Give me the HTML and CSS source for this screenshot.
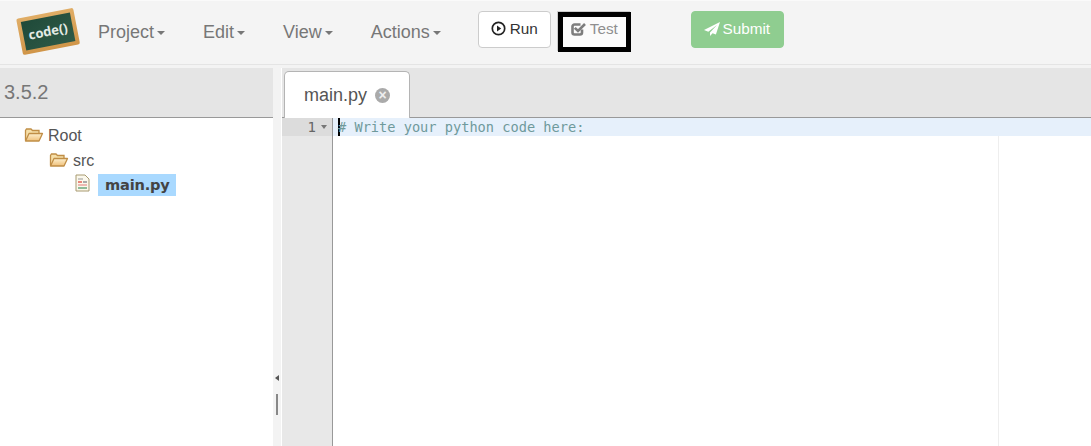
FILE: index.html
```html
<!DOCTYPE html>
<html lang="en">
<head>
<meta charset="utf-8">
<title>code()</title>
<link rel="stylesheet" href="styles.css">
</head>
<body>
<nav class="navbar">
  <svg class="logo" width="66" height="54" viewBox="0 0 66 54">
    <defs>
      <linearGradient id="wood" x1="0" y1="0" x2="0" y2="1"><stop offset="0" stop-color="#e0ad66"/><stop offset="1" stop-color="#d09548"/></linearGradient>
      <linearGradient id="board" x1="0" y1="0" x2="1" y2="1"><stop offset="0" stop-color="#1f4a39"/><stop offset="1" stop-color="#2f5a47"/></linearGradient>
    </defs>
    <g transform="rotate(-11 33 27)">
      <rect x="4" y="9" width="58" height="37" rx="2" fill="url(#wood)"/>
      <rect x="8" y="13" width="50" height="29" fill="url(#board)"/>
      <text class="logo-text" x="33" y="32" text-anchor="middle">code()</text>
    </g>
  </svg>
  <a class="menu menu-first">Project<span class="caret"></span></a>
  <a class="menu">Edit<span class="caret"></span></a>
  <a class="menu">View<span class="caret"></span></a>
  <a class="menu">Actions<span class="caret"></span></a>
  <button class="btn btn-run">
    <svg width="15" height="15" viewBox="0 0 15 15"><circle cx="7.500" cy="7.500" r="6.200" fill="none" stroke="#222" stroke-width="1.700"/><path d="M6 4.600 10.200 7.500 6 10.400Z" fill="#222"/></svg>
    Run
  </button>
  <button class="btn btn-test">
    <svg width="15" height="14" viewBox="0 0 15 14"><path d="M11 7.500V10.500a2 2 0 0 1-2 2H3.500a2 2 0 0 1-2-2V4.500a2 2 0 0 1 2-2H9.500" fill="none" stroke="#7d7d7d" stroke-width="2.600"/><path d="M3.800 5.800 7 9 14 2" fill="none" stroke="#7d7d7d" stroke-width="2.600"/></svg>
    Test
  </button>
  <button class="btn btn-submit">
    <svg width="16" height="14" viewBox="0 0 16 14"><path d="M16 0 0 8l4.300 1.800L13 3 6 10.600V14l2.600-2.800 3.300 1.400Z" fill="#fff"/></svg>
    Submit
  </button>
</nav>
<main class="workspace">
  <aside class="sidebar">
    <div class="version">3.5.2</div>
    <ul class="tree">
      <li class="node node-root">
        <svg class="folder" width="20" height="16" viewBox="0 0 20 16"><use href="#folder-open"/></svg>Root
      </li>
      <li class="node node-src">
        <svg class="folder" width="20" height="16" viewBox="0 0 20 16"><use href="#folder-open"/></svg>src
      </li>
      <li class="node node-file">
        <svg class="file" width="15" height="18" viewBox="0 0 15 18">
          <path d="M1 1h9l4 4v12H1Z" fill="#fbf8ec" stroke="#a89a70"/>
          <path d="M3 5h5" stroke="#999"/>
          <path d="M3 8h4" stroke="#e8877c" stroke-width="2"/>
          <path d="M8 8h4" stroke="#aaa" stroke-width="2"/>
          <path d="M3 11h9" stroke="#e8a5a0" stroke-width="1.500"/>
          <path d="M3 14h9" stroke="#6aa77e" stroke-width="1.500"/>
        </svg>
        <span class="selected">main.py</span>
      </li>
    </ul>
  </aside>
  <div class="splitter">
    <span class="split-arrow"></span>
    <span class="split-handle"></span>
  </div>
  <section class="editor">
    <div class="tabs">
      <div class="tab">main.py<span class="tab-close">×</span></div>
    </div>
    <div class="code">
      <div class="gutter">
        <div class="gutter-active"><span>1</span><span class="fold"></span></div>
      </div>
      <div class="lines">
        <div class="active-line"><span class="cursor"></span><span class="comment"># Write your python code here:</span></div>
        <span class="print-margin"></span>
      </div>
    </div>
  </section>
</main>
<svg class="defs" width="0" height="0">
  <defs>
    <linearGradient id="fold-fill" x1="0" y1="0" x2="0" y2="1"><stop offset="0" stop-color="#fdf0cf"/><stop offset="1" stop-color="#efc07a"/></linearGradient>
    <g id="folder-open">
      <path d="M1.500 13.500V3.500l1-1.500h4.500l1.500 1.500h6.500v2.500" fill="#f6dfa8" stroke="#c08e46" stroke-width="1.300"/>
      <path d="M1.500 14h13.500l3.500-7.500H5Z" fill="url(#fold-fill)" stroke="#c08e46" stroke-width="1.300" stroke-linejoin="round"/>
    </g>
  </defs>
</svg>
</body>
</html>
```
FILE: styles.css
```css
* { box-sizing: border-box; }
html, body { margin: 0; height: 100%; }
body {
  width: 1091px;
  height: 446px;
  overflow: hidden;
  background: #f3f3f3;
  font-family: "Liberation Sans", Arial, sans-serif;
  color: #333;
  display: flex;
  flex-direction: column;
}
.defs { flex: none; }
.navbar {
  height: 65px;
  flex: none;
  display: flex;
  align-items: flex-start;
  background: #f4f4f4;
  border-top: 1px solid #fafafa;
  border-bottom: 1px solid #e4e4e4;
  position: relative;
}
.logo { margin: 3px 0 0 15px; flex: none; }
.logo-text {
  font-family: "Open Sans", sans-serif;
  font-weight: 700;
  font-size: 13px;
  fill: #e4ebe6;
}
.menu {
  font-size: 18px;
  line-height: 20px;
  color: #777;
  margin: 21px 0 0 38px;
  display: flex;
  align-items: center;
}
.menu-first { margin-left: 17px; }
.caret {
  width: 0;
  height: 0;
  margin: 2px 0 0 3px;
  border-top: 4.500px solid #777;
  border-left: 4.500px solid transparent;
  border-right: 4.500px solid transparent;
}
.btn {
  font-family: inherit;
  font-size: 15.300px;
  height: 37px;
  margin-top: 10px;
  padding: 0;
  border-radius: 4px;
  border: 1px solid #ccc;
  background: #fff;
  color: #333;
  display: flex;
  align-items: center;
  justify-content: center;
  gap: 4px;
}
.btn-run { width: 73px; margin-left: 37px; padding-bottom: 2px; }
.btn-test {
  width: 73px;
  height: 40px;
  margin: 11px 0 0 7px;
  border: 5px solid #000;
  border-radius: 0;
  background: #fbfbfb;
  color: #8f8f8f;
  padding-bottom: 7px;
  gap: 4px;
  box-shadow: -1px -1px 0 0 #ccc;
}
.btn-submit {
  width: 93px;
  margin-left: 60px;
  background: #8fcd90;
  border-color: #8fcd90;
  color: #fff;
  padding-bottom: 2px;
  gap: 2px;
}
.workspace {
  flex: 1;
  min-height: 0;
  display: flex;
  margin-top: 3px;
}
.sidebar {
  width: 273px;
  flex: none;
  background: #fff;
}
.version {
  height: 50px;
  background: #e5e5e5;
  border-bottom: 1px solid #999;
  color: #777;
  font-size: 20px;
  line-height: 48px;
  padding-left: 4px;
}
.tree {
  list-style: none;
  margin: 0;
  padding: 8px 0 0;
}
.node {
  height: 25px;
  font-size: 16px;
  line-height: 20px;
  color: #555;
  display: flex;
  align-items: flex-start;
}
.node-root { padding-left: 24px; }
.node-src { padding-left: 49px; }
.node-file { padding-left: 75px; height: 22px; margin-top: -2px; }
.folder { margin: 1px 4px 0 0; flex: none; }
.file { margin: 0 8px 0 0; flex: none; }
.selected {
  background: #a9d9ff;
  color: #444;
  font-family: "DejaVu Sans", sans-serif;
  font-weight: 700;
  font-size: 14.600px;
  line-height: 22px;
  padding: 0 6.500px 0 7px;
  letter-spacing: -.2px;
}
.splitter {
  width: 9px;
  flex: none;
  background: #f3f3f3;
  border-right: 1px solid #fff;
  position: relative;
}
.split-arrow {
  position: absolute;
  left: 2px;
  top: 307px;
  border-right: 4px solid #555;
  border-top: 3.500px solid transparent;
  border-bottom: 3.500px solid transparent;
}
.split-handle {
  position: absolute;
  left: 3px;
  top: 326px;
  width: 2px;
  height: 21px;
  background: #888;
}
.editor {
  flex: 1;
  min-width: 0;
  display: flex;
  flex-direction: column;
  background: #fff;
}
.tabs {
  height: 50px;
  flex: none;
  background: #e5e5e5;
  border-bottom: 1px solid #999;
  padding: 3px 0 0 2px;
  display: flex;
}
.tab {
  width: 126px;
  height: 47px;
  background: #fff;
  border: 1px solid #b4b4b4;
  border-bottom: 0;
  border-radius: 5px 5px 0 0;
  font-size: 18px;
  line-height: 46px;
  color: #555;
  padding-left: 19px;
  display: flex;
  align-items: center;
  gap: 8px;
}
.tab-close {
  width: 15px;
  height: 15px;
  margin-top: 1px;
  border-radius: 50%;
  background: #aaa;
  color: #eee;
  font-size: 14px;
  font-weight: 700;
  line-height: 15px;
  text-align: center;
}
.code {
  flex: 1;
  min-height: 0;
  display: flex;
}
.gutter {
  width: 51px;
  flex: none;
  background: #e8e8e8;
  border-right: 1px solid #999;
}
.gutter-active {
  height: 18px;
  background: #dcdcdc;
  color: #666;
  font-family: "DejaVu Sans Mono", monospace;
  font-size: 14px;
  line-height: 18px;
  display: flex;
  align-items: center;
  justify-content: flex-end;
  padding-right: 5px;
  gap: 5px;
}
.fold {
  border-top: 4px solid #777;
  border-left: 3.500px solid transparent;
  border-right: 3.500px solid transparent;
}
.lines {
  flex: 1;
  min-width: 0;
  position: relative;
}
.active-line {
  height: 18px;
  background: #e6f0fb;
  padding-left: 5px;
  display: flex;
  position: relative;
  z-index: 1;
}
.cursor {
  width: 2px;
  height: 18px;
  background: #000;
  margin-right: -2px;
  flex: none;
}
.comment {
  font-family: "DejaVu Sans Mono", monospace;
  font-size: 13.650px;
  line-height: 18px;
  color: #6f9a9c;
  white-space: pre;
}
.print-margin {
  position: absolute;
  left: 665px;
  top: 0;
  bottom: 0;
  width: 1px;
  background: #eeeeee;
}
```
